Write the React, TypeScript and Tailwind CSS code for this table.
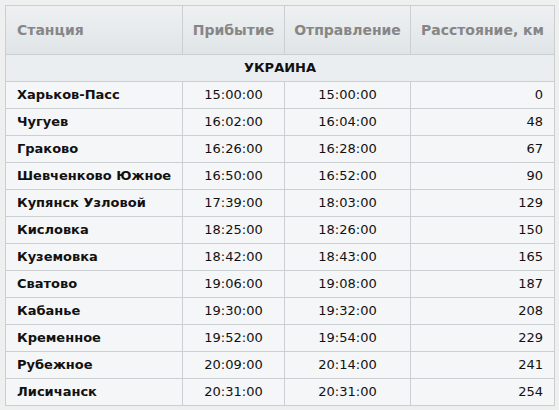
const rows: [string, string, string, number][] = [
  ["Харьков-Пасс", "15:00:00", "15:00:00", 0],
  ["Чугуев", "16:02:00", "16:04:00", 48],
  ["Граково", "16:26:00", "16:28:00", 67],
  ["Шевченково Южное", "16:50:00", "16:52:00", 90],
  ["Купянск Узловой", "17:39:00", "18:03:00", 129],
  ["Кисловка", "18:25:00", "18:26:00", 150],
  ["Куземовка", "18:42:00", "18:43:00", 165],
  ["Сватово", "19:06:00", "19:08:00", 187],
  ["Кабанье", "19:30:00", "19:32:00", 208],
  ["Кременное", "19:52:00", "19:54:00", 229],
  ["Рубежное", "20:09:00", "20:14:00", 241],
  ["Лисичанск", "20:31:00", "20:31:00", 254],
];

export default function App() {
  return (
    <div
      className="w-[559px] h-[410px] bg-[#eef0f0] p-[5px] text-[13px]"
      style={{ fontFamily: '"DejaVu Sans", Verdana, sans-serif' }}
    >
      <table className="table-fixed border-collapse w-[549px] bg-[#f5f6f7]">
        <colgroup>
          <col className="w-[177px]" />
          <col className="w-[102px]" />
          <col className="w-[126px]" />
          <col className="w-[144px]" />
        </colgroup>
        <thead>
          {/* Header */}
          <tr className="h-[49px] bg-gradient-to-b from-[#eef1f2] to-[#dfe4e6] text-[#868686] text-[14px] font-bold">
            <th className="border border-[#cbcfd1] text-left pl-[11px]">Станция</th>
            <th className="border border-[#cbcfd1] text-center">Прибытие</th>
            <th className="border border-[#cbcfd1] text-center">Отправление</th>
            <th className="border border-[#cbcfd1] text-center">Расстояние, км</th>
          </tr>
        </thead>
        <tbody>
          <tr className="h-[27px] bg-[#ebeef0]">
            <td colSpan={4} className="border border-[#cbcfd1] text-center font-bold text-[#111]">
              УКРАИНА
            </td>
          </tr>
          {rows.map(([name, arr, dep, km]) => (
            <tr key={name} className="h-[27px] text-[#111]">
              <td className="border border-[#cbcfd1] pl-[11px] font-bold">{name}</td>
              <td className="border border-[#cbcfd1] text-center">{arr}</td>
              <td className="border border-[#cbcfd1] text-center">{dep}</td>
              <td className="border border-[#cbcfd1] text-right pr-[11px]">{km}</td>
            </tr>
          ))}
        </tbody>
      </table>
    </div>
  );
}
